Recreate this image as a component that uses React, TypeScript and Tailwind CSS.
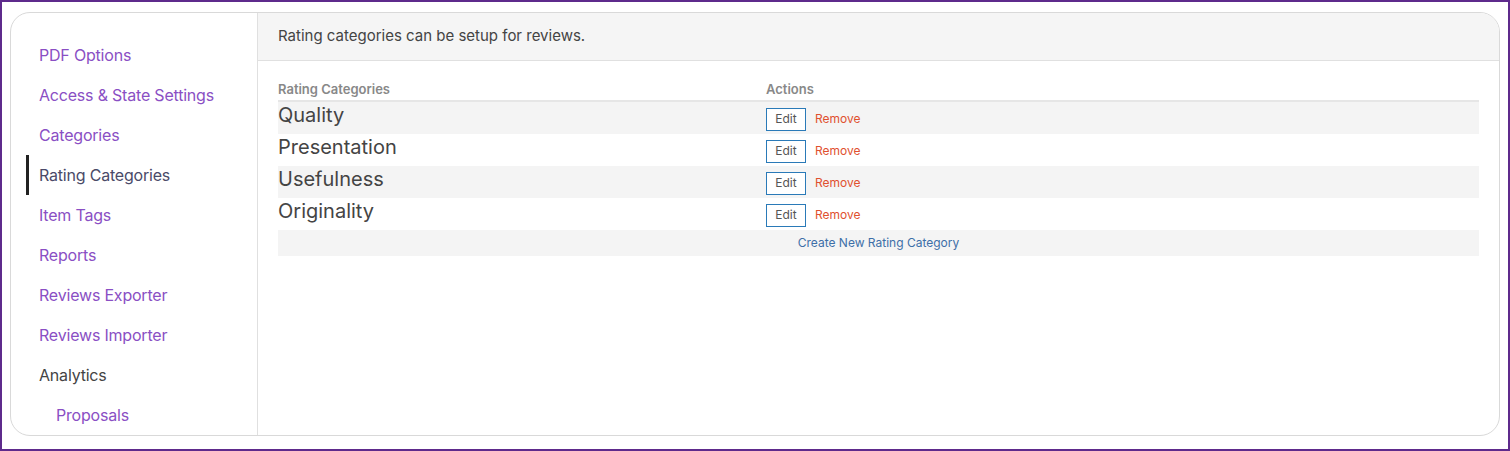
export default function App() {
  const nav = [
    ["PDF Options", "text-[#8a4fc4]", ""],
    ["Access & State Settings", "text-[#8a4fc4]", ""],
    ["Categories", "text-[#8a4fc4]", ""],
    ["Rating Categories", "text-[#4a4a68]", "active"],
    ["Item Tags", "text-[#8a4fc4]", ""],
    ["Reports", "text-[#8a4fc4]", ""],
    ["Reviews Exporter", "text-[#8a4fc4]", ""],
    ["Reviews Importer", "text-[#8a4fc4]", ""],
    ["Analytics", "text-[#444]", ""],
    ["Proposals", "text-[#8a4fc4]", "sub"],
  ];
  const rows = ["Quality", "Presentation", "Usefulness", "Originality"];
  return (
    <div className="w-[1510px] h-[451px] border-2 border-[#5e2a8c] bg-white p-[8px] pt-[10px] box-border" style={{ fontFamily: "Inter, 'Noto Sans', sans-serif" }}>
      <div className="flex h-[424px] border border-[#d9d9d9] rounded-[20px] overflow-hidden">
        <div className="w-[247px] shrink-0 border-r border-[#e0e0e0] pt-[22px]">
          {nav.map(([t, c, k]) => (
            <div key={t} className={`relative h-[40px] flex items-center text-[16px] tracking-[-0.2px] ${c} ${k === "sub" ? "pl-[45px]" : "pl-[28px]"}`}>
              {k === "active" && <div className="absolute left-[15px] top-[0px] w-[3px] h-[40px] bg-[#222]" />}
              <span className="-mt-[1px]">{t}</span>
            </div>
          ))}
        </div>
        <div className="flex-1 flex flex-col">
          <div className="h-[48px] bg-[#f5f5f5] border-b border-[#e0e0e0] flex items-center pl-[20px] text-[15px] text-[#444]">
            Rating categories can be setup for reviews.
          </div>
          <div className="px-[20px] pt-[20px]">
            <div className="flex h-[21px] items-end border-b-2 border-[#e6e6e6] text-[13px] font-semibold text-[#888] pb-[1px]">
              <div className="w-[488px]">Rating Categories</div>
              <div>Actions</div>
            </div>
            {rows.map((r, i) => (
              <div key={r} className={`flex h-[32px] ${i % 2 === 0 ? "bg-[#f4f4f4]" : "bg-white"}`}>
                <div className="w-[488px] text-[20px] text-[#444] leading-[26px]">{r}</div>
                <div className="flex items-center gap-[9px] pt-[2px]">
                  <button className="h-[23px] w-[40px] border border-[#2a7ab8] text-[12px] text-[#555] bg-white">Edit</button>
                  <span className="text-[12px] text-[#e0502f]">Remove</span>
                </div>
              </div>
            ))}
            <div className="h-[26px] bg-[#f4f4f4] flex items-center justify-center text-[12px] text-[#3d6fa8]">
              Create New Rating Category
            </div>
          </div>
        </div>
      </div>
    </div>
  );
}
